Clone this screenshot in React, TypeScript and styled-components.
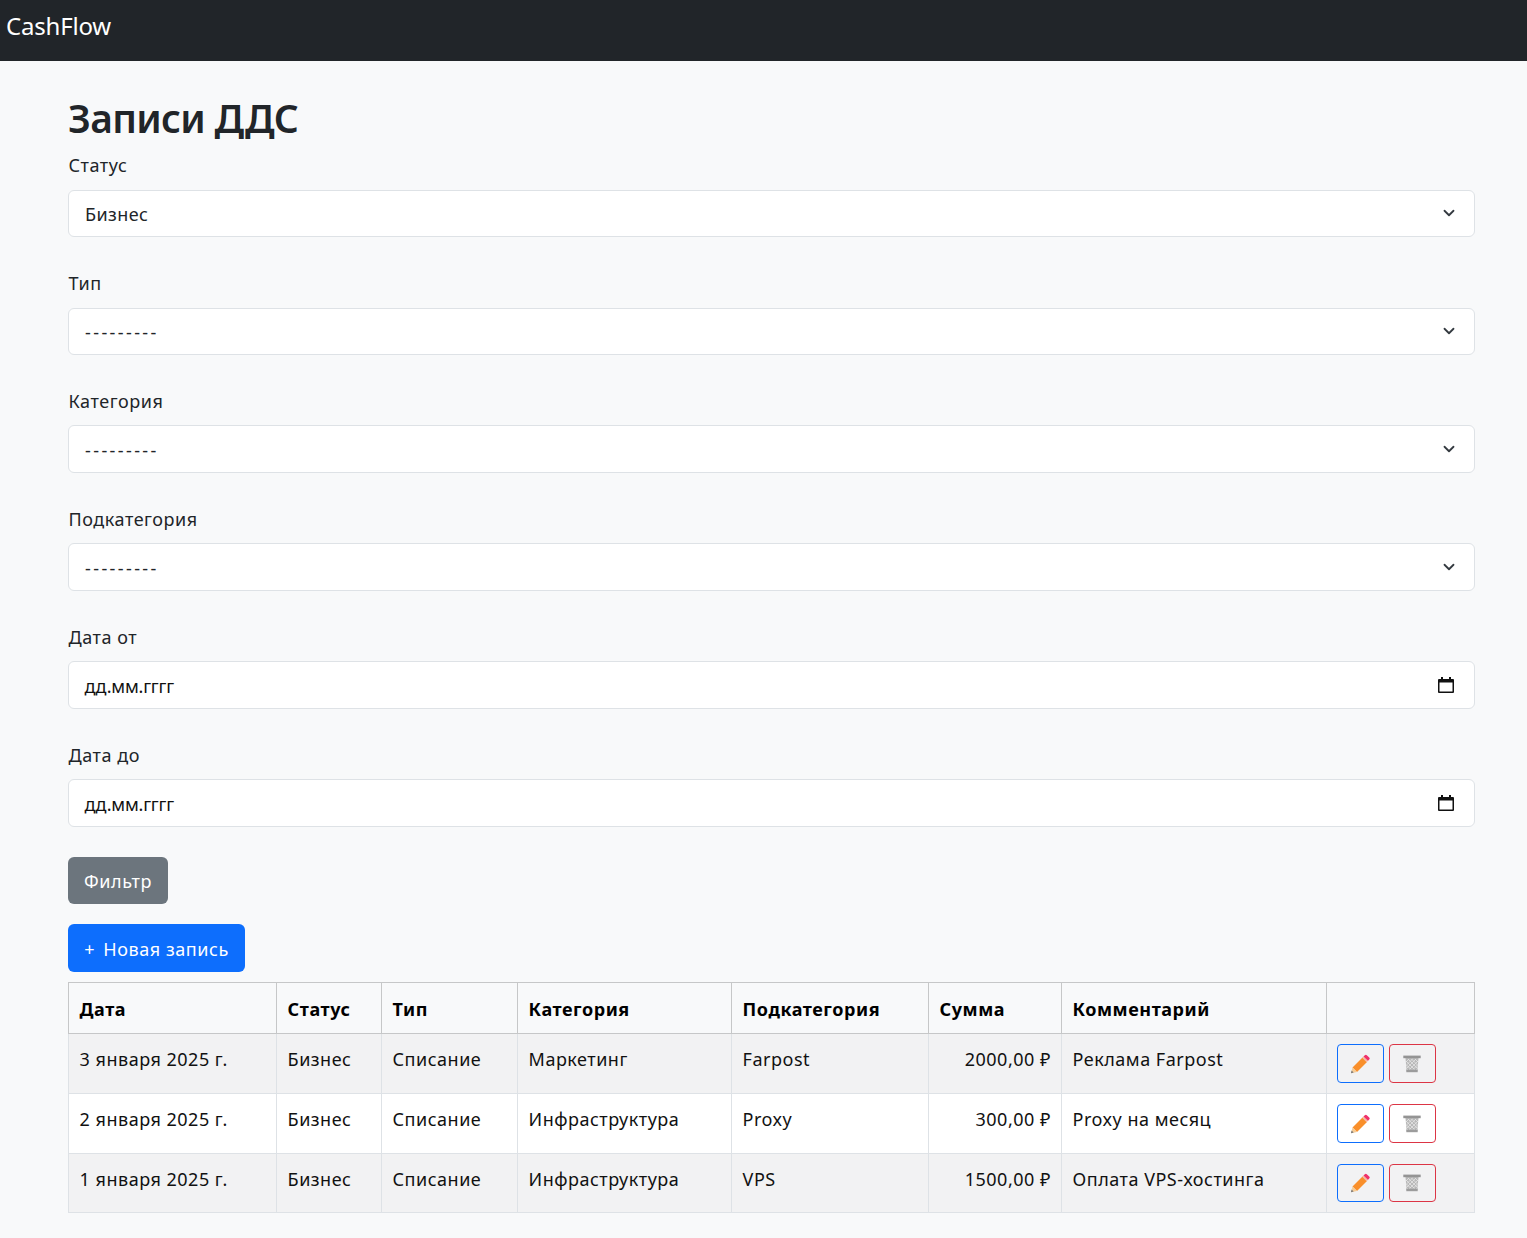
import React from 'react';
import styled, { createGlobalStyle } from 'styled-components';

const colors = {
  dark: '#212529',
  page: '#f8f9fa',
  line: '#dee2e6',
  headLine: '#c6c7c8',
  grey: '#6c757d',
  blue: '#0d6efd',
  red: '#dc3545',
};

const chevron =
  "url(\"data:image/svg+xml,%3csvg xmlns='http://www.w3.org/2000/svg' viewBox='0 0 16 16'%3e%3cpath fill='none' stroke='%23343a40' stroke-linecap='round' stroke-linejoin='round' stroke-width='2.4' d='m2 5 6 6 6-6'/%3e%3c/svg%3e\")";

const GlobalStyle = createGlobalStyle`
  html, body {
    margin: 0;
    padding: 0;
    background: ${colors.page};
    color: ${colors.dark};
    font-family: "Noto Sans", "Open Sans", sans-serif;
    font-size: 18px;
    line-height: 24px;
    letter-spacing: 0.4px;
    overflow: hidden;
  }
  * {
    box-sizing: border-box;
  }
`;

const Navbar = styled.nav`
  height: 61px;
  background: ${colors.dark};
  padding: 11px 6px 0;
`;

const Brand = styled.div`
  color: #fff;
  font-size: 24px;
  line-height: 30px;
  letter-spacing: -0.2px;
`;

const Main = styled.main`
  padding: 33px 52px 0 68px;
`;

const Title = styled.h1`
  margin: 0 0 11.4px;
  font-size: 39px;
  line-height: 48px;
  font-weight: 600;
  letter-spacing: -0.7px;
`;

const Field = styled.div<{ $date?: boolean }>`
  margin-bottom: ${(p) => (p.$date ? '33.6px' : '34px')};
`;

const Label = styled.label`
  display: block;
  margin-bottom: 12.4px;
  padding-left: 0.5px;
  letter-spacing: 0.55px;
`;

const Select = styled.select<{ $empty: boolean }>`
  display: block;
  width: 100%;
  height: 47.4px;
  padding: 2px 17px 0 16px;
  appearance: none;
  background: #fff ${chevron} no-repeat right 17px center / 16px 12px;
  border: 1px solid ${colors.line};
  border-radius: 6px;
  color: ${colors.dark};
  font: inherit;
  letter-spacing: ${(p) => (p.$empty ? '2.4px' : '0.4px')};
`;

const DateBox = styled.div`
  display: flex;
  align-items: center;
  justify-content: space-between;
  height: 48px;
  padding: 0 19px 0 15.5px;
  background: #fff;
  border: 1px solid ${colors.line};
  border-radius: 6px;
  color: #111;
  letter-spacing: -0.2px;
`;

const DateText = styled.span`
  padding-top: 2px;
`;

const Button = styled.button<{ $bg: string }>`
  display: block;
  padding: 2px 0 0;
  border: 0;
  border-radius: 6px;
  background: ${(p) => p.$bg};
  color: #fff;
  font: inherit;
`;

const FilterButton = styled(Button)`
  width: 100px;
  height: 47px;
  margin-top: -3.6px;
  margin-bottom: 20px;
  letter-spacing: 0.6px;
`;

const NewButton = styled(Button)`
  width: 177px;
  height: 48px;
  margin-bottom: 10px;
  letter-spacing: 0.55px;
`;

const PlusMark = styled.span`
  margin-right: 3px;
`;

const Table = styled.table`
  width: calc(100% - 1px);
  table-layout: fixed;
  border-collapse: collapse;
  color: #111;
  letter-spacing: 0.5px;
`;

const Head = styled.th`
  height: 51px;
  padding: 2px 10px 0 10.6px;
  border: 1px solid ${colors.headLine};
  color: #000;
  text-align: left;
  font-weight: 700;
  letter-spacing: 0.55px;
`;

const Row = styled.tr<{ $striped: boolean }>`
  background: ${(p) => (p.$striped ? '#f2f2f3' : '#fff')};

  &:last-child td {
    height: 59px;
  }
`;

const Cell = styled.td<{ $right?: boolean }>`
  height: 60px;
  padding: 0 10px 8px 10.6px;
  border: 1px solid ${colors.line};
  text-align: ${(p) => (p.$right ? 'right' : 'left')};
  white-space: nowrap;
`;

const ActionsCell = styled.td`
  padding: 0 0 0 10px;
  border: 1px solid ${colors.line};
`;

const Actions = styled.div`
  display: flex;
  gap: 5px;
`;

const IconButton = styled.button<{ $color: string }>`
  display: flex;
  align-items: center;
  justify-content: center;
  width: 47px;
  height: 38.5px;
  padding: 1px 1px 0 0;
  background: transparent;
  border: 1px solid ${(p) => p.$color};
  border-radius: 4px;
`;

const CalendarIcon = () => (
  <svg width="18" height="18" viewBox="0 0 18 18">
    <path d="M4 1h2v2h6V1h2v2h2a1 1 0 0 1 1 1v12a1 1 0 0 1-1 1H2a1 1 0 0 1-1-1V4a1 1 0 0 1 1-1h2z" fill="#111" />
    <rect x="2.5" y="6.5" width="13" height="9" fill="#fff" />
  </svg>
);

const PencilIcon = () => (
  <svg width="20" height="20" viewBox="0 0 20 20">
    <path d="M12.5 3.5 17 8 7 18 2.5 13.5z" fill="#f98f2b" />
    <path d="M2.5 13.5 7 18 1 19.2z" fill="#f6cc96" />
    <path d="M1.6 16.6 3.6 18.6 1 19.2z" fill="#777" />
    <path d="M12.2 3.8 14 2l4.4 4.4L16.6 8.2z" fill="#f3b9a5" />
    <path d="M13.6 2.4 14.8 1.2a1.4 1.4 0 0 1 2 0l2.4 2.4a1.4 1.4 0 0 1 0 2L18 6.8z" fill="#f0316a" />
  </svg>
);

const TrashIcon = () => (
  <svg width="20" height="20" viewBox="0 0 20 20">
    <path d="M3.5 4h13l-1.2 13H4.7z" fill="#b8b8b8" />
    <path
      d="M4 8 7 5M4.3 11.2 10.5 5M5 14 14 5M7 16 16 7M10.5 16 15.6 10.9M14 16 15.3 14.7M16 8 13 5M15.7 11.2 9.5 5M15 14 6 5M13 16 4 7M9.5 16 4.4 10.9M6 16 4.7 14.7"
      fill="none"
      stroke="#e4e4e4"
      strokeWidth="0.8"
    />
    <rect x="1.3" y="1.6" width="17.4" height="2.6" fill="#949494" />
    <rect x="4.3" y="15.6" width="11.4" height="2.6" fill="#9c9c9c" />
  </svg>
);

const selects = [
  { label: 'Статус', value: 'Бизнес' },
  { label: 'Тип', value: '---------' },
  { label: 'Категория', value: '---------' },
  { label: 'Подкатегория', value: '---------' },
];

const columns = [
  { title: 'Дата', width: 208 },
  { title: 'Статус', width: 105 },
  { title: 'Тип', width: 136 },
  { title: 'Категория', width: 214 },
  { title: 'Подкатегория', width: 197 },
  { title: 'Сумма', width: 133 },
  { title: 'Комментарий', width: 265 },
  { title: '', width: 148 },
];

const rows = [
  ['3 января 2025 г.', 'Бизнес', 'Списание', 'Маркетинг', 'Farpost', '2000,00 ₽', 'Реклама Farpost'],
  ['2 января 2025 г.', 'Бизнес', 'Списание', 'Инфраструктура', 'Proxy', '300,00 ₽', 'Proxy на месяц'],
  ['1 января 2025 г.', 'Бизнес', 'Списание', 'Инфраструктура', 'VPS', '1500,00 ₽', 'Оплата VPS-хостинга'],
];

const App = () => {
  return (
    <>
      <GlobalStyle />
      <Navbar>
        <Brand>CashFlow</Brand>
      </Navbar>
      <Main>
        <Title>Записи ДДС</Title>
        {selects.map((item) => (
          <Field key={item.label}>
            <Label>{item.label}</Label>
            <Select defaultValue={item.value} $empty={item.value.startsWith('-')}>
              <option>{item.value}</option>
            </Select>
          </Field>
        ))}
        {['Дата от', 'Дата до'].map((label) => (
          <Field key={label} $date>
            <Label>{label}</Label>
            <DateBox>
              <DateText>дд.мм.гггг</DateText>
              <CalendarIcon />
            </DateBox>
          </Field>
        ))}
        <FilterButton $bg={colors.grey}>Фильтр</FilterButton>
        <NewButton $bg={colors.blue}>
          <PlusMark>+</PlusMark> Новая запись
        </NewButton>
        <Table>
          <colgroup>
            {columns.map((col, i) => (
              <col key={i} width={col.width} />
            ))}
          </colgroup>
          <thead>
            <tr>
              {columns.map((col, i) => (
                <Head key={i}>{col.title}</Head>
              ))}
            </tr>
          </thead>
          <tbody>
            {rows.map((row, r) => (
              <Row key={r} $striped={r % 2 === 0}>
                {row.map((text, c) => (
                  <Cell key={c} $right={c === 5}>
                    {text}
                  </Cell>
                ))}
                <ActionsCell>
                  <Actions>
                    <IconButton $color={colors.blue}>
                      <PencilIcon />
                    </IconButton>
                    <IconButton $color={colors.red}>
                      <TrashIcon />
                    </IconButton>
                  </Actions>
                </ActionsCell>
              </Row>
            ))}
          </tbody>
        </Table>
      </Main>
    </>
  );
};

export default App;
